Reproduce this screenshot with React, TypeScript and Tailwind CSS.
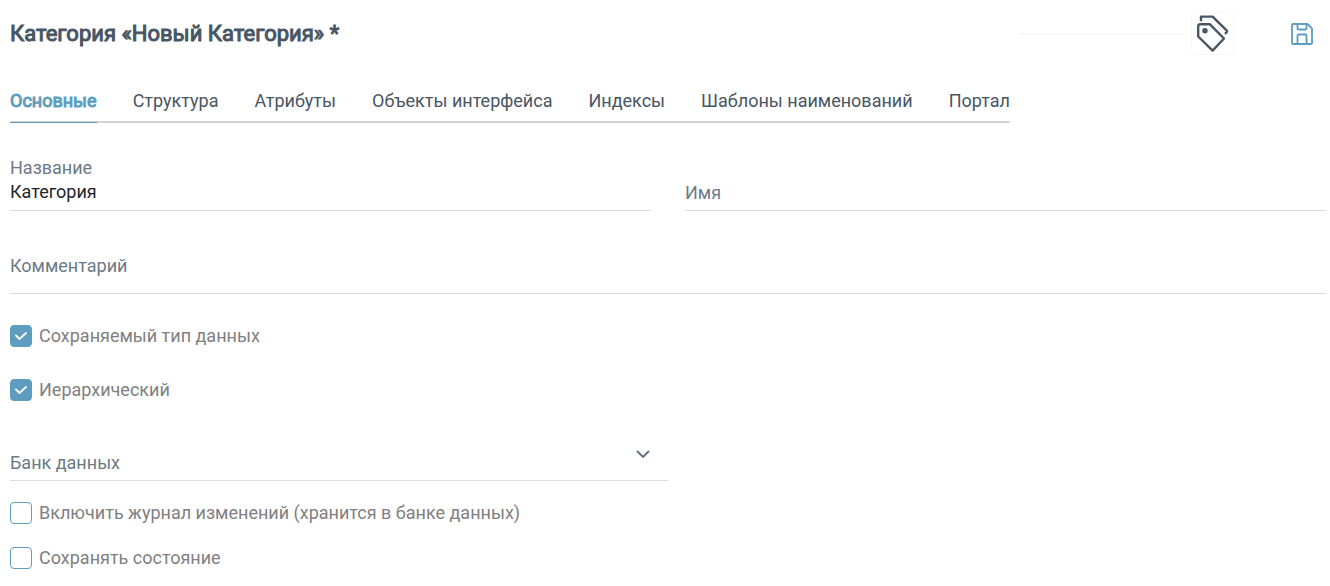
import { useId, useState } from "react"
import clsx from "clsx"

const TABS = [
  "Основные",
  "Структура",
  "Атрибуты",
  "Объекты интерфейса",
  "Индексы",
  "Шаблоны наименований",
  "Портал",
]

function TagsIcon() {
  return (
    <svg viewBox="0 0 32 38" className="h-[38px] w-8" fill="none" stroke="#485663" strokeWidth="2.4" strokeLinejoin="round">
      <path d="M1.2 11.5 Q1.2 9.3 3.4 9.3 H13 L27 23.5 L15.6 35.6 L1.2 21.5 Z" />
      <path d="M4 6.3 V1.6 H15.6 L29.6 15.4 Q31 17 27.8 18.8" />
      <circle cx="8" cy="15.8" r="2.7" fill="#485663" stroke="none" />
    </svg>
  )
}

function SaveIcon() {
  return (
    <svg viewBox="0 0 22 22" className="size-[22px]" fill="none" stroke="currentColor" strokeWidth="1.8" strokeLinejoin="round">
      <path d="M2 1 H16.5 L21 5.5 V20 Q21 21 20 21 H2 Q1 21 1 20 V2 Q1 1 2 1 Z" />
      <path d="M6.5 1 V5.5 Q6.5 6.5 7.5 6.5 H14.5 Q15.5 6.5 15.5 5.5 V1" />
      <path d="M6.5 21 V12.5 Q6.5 11.5 7.5 11.5 H14.5 Q15.5 11.5 15.5 12.5 V21" />
    </svg>
  )
}

// Text input whose label sits in the line until there is a value
function Field({ label, defaultValue = "" }: { label: string; defaultValue?: string }) {
  const id = useId()
  return (
    <div className="relative border-b border-[#dadada] pt-6 pb-[6px]">
      <input
        id={id}
        type="text"
        defaultValue={defaultValue}
        placeholder=" "
        className="peer block h-6 w-full bg-transparent leading-6 text-[#212529] outline-none"
      />
      <label
        htmlFor={id}
        className="absolute top-0 left-0 leading-6 text-[#6c7a86] peer-placeholder-shown:top-[25px]"
      >
        {label}
      </label>
    </div>
  )
}

function CommentField() {
  return (
    <div className="relative border-b border-[#dadada]">
      <textarea
        id="comment"
        rows={1}
        placeholder=" "
        className="peer block h-14 w-full resize-none bg-transparent pt-4 leading-6 text-[#212529] outline-none"
      />
      <label
        htmlFor="comment"
        className="absolute -top-2 left-0 leading-6 text-[#6c7a86] peer-placeholder-shown:top-[17px]"
      >
        Комментарий
      </label>
    </div>
  )
}

function Checkbox({ label, defaultChecked = false }: { label: string; defaultChecked?: boolean }) {
  return (
    <label className="flex w-fit items-center gap-[7px] leading-6 text-[#808080]">
      <span className="grid size-[22px] place-items-center">
        <input
          type="checkbox"
          defaultChecked={defaultChecked}
          className="peer col-start-1 row-start-1 size-[22px] appearance-none rounded border border-[#5e9dbf] checked:bg-[#5e9dbf]"
        />
        <svg
          viewBox="0 0 12 8"
          className="pointer-events-none invisible col-start-1 row-start-1 h-2 w-3 peer-checked:visible"
          fill="none"
          stroke="white"
          strokeWidth="1.8"
          strokeLinecap="round"
          strokeLinejoin="round"
        >
          <path d="M1 3.5 L4.5 7 L11 1" />
        </svg>
      </span>
      {label}
    </label>
  )
}

export default function App() {
  const [tab, setTab] = useState(TABS[0])

  return (
    <main className="bg-white pt-3 pr-1 pl-[10px] font-[Roboto,sans-serif] text-lg text-[#485663]">
      <header className="flex items-center">
        <h1 className="text-[22px] leading-7 font-normal [-webkit-text-stroke:1px_#485663]">
          Категория «Новый Категория» *
        </h1>
        <div className="mr-[7px] ml-auto h-[2px] w-[166px] bg-[#f8f8f8]" />
        <div className="flex h-[43px] w-[43px] justify-center rounded-md border border-[#f7f7f7] pt-[2px]">
          <TagsIcon />
        </div>
        <button type="button" aria-label="Сохранить" className="mr-[13px] ml-[57px] text-[#5e9dbf]">
          <SaveIcon />
        </button>
      </header>

      <nav className="mt-[34px] flex w-fit gap-9 border-b-2 border-[#d2d2d2]">
        {TABS.map((name) => (
          <button
            key={name}
            type="button"
            onClick={() => setTab(name)}
            className={clsx(
              "-mb-[2px] border-b pb-[9px] leading-6 whitespace-nowrap",
              name === tab
                ? "border-b-[#5e9dbf] text-[#5e9dbf] [-webkit-text-stroke:1px_#5e9dbf]"
                : "border-b-transparent",
            )}
          >
            {name}
          </button>
        ))}
      </nav>

      <form className="mt-[33px]">
        <div className="grid grid-cols-2 gap-[34px]">
          <Field label="Название" defaultValue="Категория" />
          <Field label="Имя" />
        </div>
        <div className="mt-[26px]">
          <CommentField />
        </div>
        <div className="mt-[30px] flex flex-col gap-[30px]">
          <Checkbox label="Сохраняемый тип данных" defaultChecked />
          <Checkbox label="Иерархический" defaultChecked />
        </div>
        <div className="relative mt-9 w-1/2 border-b border-[#dadada]">
          <select id="bank" className="block h-[42px] w-full appearance-none bg-transparent outline-none">
            <option value="" />
          </select>
          <label htmlFor="bank" className="absolute bottom-[5px] left-0 leading-6 text-[#6c7a86]">
            Банк данных
          </label>
          <svg
            viewBox="0 0 14 8"
            className="pointer-events-none absolute top-3 right-[18px] h-2 w-[14px]"
            fill="none"
            stroke="#5f7180"
            strokeWidth="1.8"
          >
            <path d="M1 1 L7 7 L13 1" />
          </svg>
        </div>
        <div className="mt-5 flex flex-col gap-[21px]">
          <Checkbox label="Включить журнал изменений (хранится в банке данных)" />
          <Checkbox label="Сохранять состояние" />
        </div>
      </form>
    </main>
  )
}
